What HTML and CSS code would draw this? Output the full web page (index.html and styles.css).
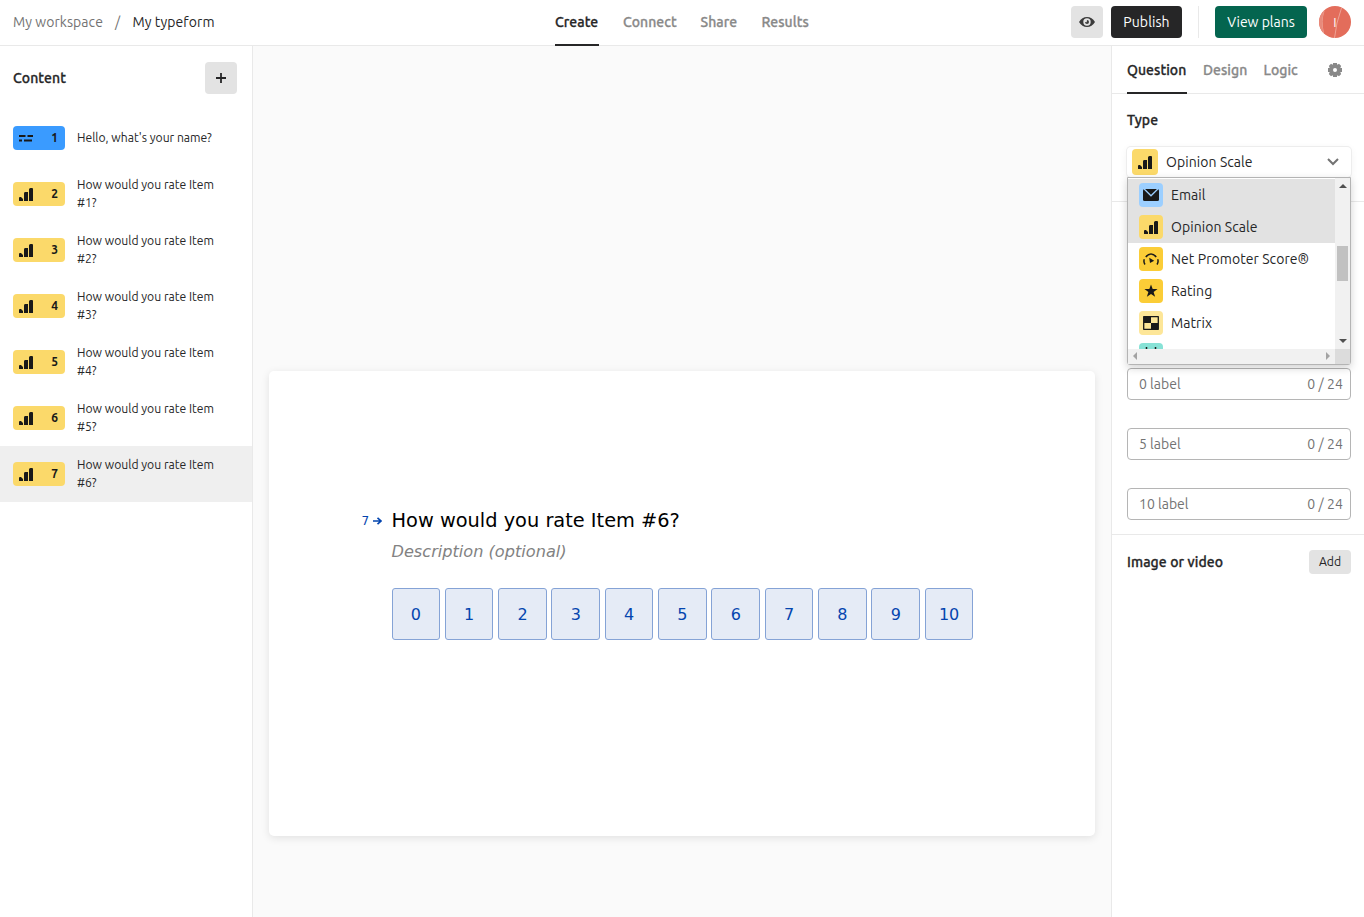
FILE: index.html
```html
<!DOCTYPE html>
<html lang="en">
<head>
<meta charset="utf-8">
<title>My typeform</title>
<link rel="stylesheet" href="styles.css">
</head>
<body>
<svg class="defs" width="0" height="0">
  <symbol id="bars" viewBox="0 0 14 13"><path d="M0 10q0-1 1-1h1l2 2v2H.5q-.5 0-.5-.5zM5 5.500q0-1.500 1-1.500h3v9H5zM10 1.500q0-1.500 1.500-1.500H13q1 0 1 1v12h-4z" fill="currentColor"/></symbol>
</svg>
<header class="topbar">
  <nav class="crumbs"><span class="crumb-ws">My workspace</span><span class="crumb-sep">/</span><span class="crumb-form">My typeform</span></nav>
  <nav class="main-tabs">
    <a class="tab tab-create active">Create</a><a class="tab tab-connect">Connect</a><a class="tab tab-share">Share</a><a class="tab tab-results">Results</a>
  </nav>
  <div class="actions">
    <button class="btn eye"><svg width="16" height="10" viewBox="0 0 16 10"><path fill-rule="evenodd" d="M0 5Q3 0 8 0T16 5Q13 10 8 10T0 5zM8 1.300a3.700 3.700 0 1 0 0 7.400 3.700 3.700 0 0 0 0-7.400z" fill="#3c3c3c"/><path d="M8 3a2 2 0 1 1-2 2l1.700.200z" fill="#3c3c3c"/></svg></button>
    <button class="btn publish">Publish</button>
    <span class="divider"></span>
    <button class="btn plans">View plans</button>
    <span class="avatar"><svg width="32" height="32" viewBox="0 0 32 32"><circle cx="16" cy="16" r="16" fill="#e36d5b"/><path d="M5 5Q1.500 15 4.500 27M22.500 2L18 17 15.500 32" fill="none" stroke="#f0b0a5" stroke-width=".800"/><path d="M5 5Q1.500 15 4.500 27Q0 22 0 16T5 5z" fill="#e88a7b"/></svg><b>I</b></span>
  </div>
</header>
<main class="workspace">
  <aside class="content-panel">
    <div class="content-head"><h2 class="content-title">Content</h2><button class="btn plus"><svg width="10" height="10" viewBox="0 0 10 10"><path d="M5 0v10M0 5h10" stroke="#262627" stroke-width="1.800"/></svg></button></div>
    <ul class="questions">
      <li class="question"><span class="badge blue"><svg width="15" height="7" viewBox="0 0 15 7"><path d="M0 1h6.500M8.500 1H14M0 5.500h3M5 5.500h8" stroke="#191919" stroke-width="1.900"/></svg><b>1</b></span><span class="q-text hello">Hello, what's your name?</span></li>
      <li class="question"><span class="badge"><svg width="14" height="13"><use href="#bars"/></svg><b>2</b></span><span class="q-text">How would you rate Item<br>#1?</span></li>
      <li class="question"><span class="badge"><svg width="14" height="13"><use href="#bars"/></svg><b>3</b></span><span class="q-text">How would you rate Item<br>#2?</span></li>
      <li class="question"><span class="badge"><svg width="14" height="13"><use href="#bars"/></svg><b>4</b></span><span class="q-text">How would you rate Item<br>#3?</span></li>
      <li class="question"><span class="badge"><svg width="14" height="13"><use href="#bars"/></svg><b>5</b></span><span class="q-text">How would you rate Item<br>#4?</span></li>
      <li class="question"><span class="badge"><svg width="14" height="13"><use href="#bars"/></svg><b>6</b></span><span class="q-text">How would you rate Item<br>#5?</span></li>
      <li class="question selected"><span class="badge"><svg width="14" height="13"><use href="#bars"/></svg><b>7</b></span><span class="q-text">How would you rate Item<br>#6?</span></li>
    </ul>
  </aside>
  <section class="canvas">
    <article class="card">
      <div class="prompt">
        <span class="number">7<svg width="9" height="8" viewBox="0 0 9 8"><path d="M0 4h7.500M4.500.800L8 4 4.500 7.200" fill="none" stroke="#0445af" stroke-width="1.600"/></svg></span>
        <h1 class="title">How would you rate Item #6?</h1>
      </div>
      <p class="description">Description (optional)</p>
      <div class="scale"><span>0</span><span>1</span><span>2</span><span>3</span><span>4</span><span>5</span><span>6</span><span>7</span><span>8</span><span>9</span><span>10</span></div>
    </article>
  </section>
  <aside class="settings">
    <nav class="side-tabs">
      <a class="tab tab-question active">Question</a><a class="tab tab-design">Design</a><a class="tab tab-logic">Logic</a>
      <svg class="gear" width="14" height="14" viewBox="0 0 14 14"><path fill-rule="evenodd" d="M5 0h4v1.500h.8L11 .800 13.200 3l-.7 1.200V5H14v4h-1.500v.8l.7 1.200-2.200 2.200-1.200-.7H9V14H5v-1.500h-.8L3 13.200.800 11l.7-1.200V9H0V5h1.500v-.8L.800 3 3 .800l1.200.7H5zM7 5a2 2 0 1 0 0 4 2 2 0 0 0 0-4z" fill="#898989"/></svg>
    </nav>
    <section class="type-section">
      <h3 class="type-title">Type</h3>
      <div class="select">
        <span class="tile big yellow"><svg width="14" height="13"><use href="#bars"/></svg></span><span class="select-text">Opinion Scale</span>
        <svg width="12" height="8" viewBox="0 0 12 8"><path d="M1 1l5 5 5-5" fill="none" stroke="#737373" stroke-width="2"/></svg>
        <div class="menu">
          <div class="options">
            <div class="option on"><span class="tile email"><svg width="16" height="12" viewBox="0 0 16 12"><rect width="16" height="12" rx="1.500" fill="#191919"/><path d="M1.200 0L8 6.800 14.800 0" fill="none" stroke="#9ccfff" stroke-width="1.300"/></svg></span><span class="o-email">Email</span></div>
            <div class="option on"><span class="tile yellow"><svg width="14" height="13"><use href="#bars"/></svg></span><span class="o-opinion">Opinion Scale</span></div>
            <div class="option"><span class="tile gold"><svg width="16" height="12" viewBox="0 0 16 12"><path d="M2 11.500Q.300 9 1.300 6.300M2.800 4Q5 1 8 1T13.200 4M14.700 6.300q1 2.700-.7 5.200" fill="none" stroke="#191919" stroke-width="1.500"/><path d="M6.200 4.700l5 3L7 10z" fill="#191919"/></svg></span><span class="o-nps">Net Promoter Score®</span></div>
            <div class="option"><span class="tile gold"><svg width="14" height="14" viewBox="0 0 16 15"><path d="M8 0l1.900 5.300H15.500L11 8.700l1.700 5.500L8 11l-4.700 3.200L5 8.700.500 5.300h5.600z" fill="#191919"/></svg></span><span class="o-rating">Rating</span></div>
            <div class="option"><span class="tile pale"><svg width="16" height="14" viewBox="0 0 16 14"><path d="M.700.700h14.600v12.600H.700z" fill="none" stroke="#191919" stroke-width="1.300" stroke-linejoin="round"/><path d="M1 1h7v6H1zM8 7h7v6H8z" fill="#191919"/></svg></span><span class="o-matrix">Matrix</span></div>
            <div class="option"><span class="tile teal"><svg width="14" height="16" viewBox="0 0 14 16"><path d="M2.500 0v3M11.500 0v3M0 3h14v12H0z" fill="none" stroke="#191919" stroke-width="1.500"/></svg></span></div>
          </div>
          <div class="vbar"><i class="up"></i><i class="thumb"></i><i class="down"></i></div>
          <div class="hbar"><i class="left"></i><i class="right"></i></div>
          <div class="corner"></div>
        </div>
      </div>
    </section>
    <section class="labels">
      <div class="field"><span>0 label</span><span class="count">0 / 24</span></div>
      <div class="field"><span>5 label</span><span class="count">0 / 24</span></div>
      <div class="field"><span class="ten">10 label</span><span class="count">0 / 24</span></div>
    </section>
    <section class="media"><h3 class="media-title">Image or video</h3><button class="btn add">Add</button></section>
  </aside>
</main>
</body>
</html>
```
FILE: styles.css
```css
* { box-sizing: border-box; }
body { margin: 0; height: 917px; overflow: hidden; display: flex; flex-direction: column; background: #fff; color: #262627; font: 14px/20px Ubuntu, "Noto Sans", sans-serif; white-space: nowrap; }
h1, h2, h3, p, ul { margin: 0; padding: 0; }
h2, h3 { font-size: 14px; font-weight: 500; letter-spacing: .1px; -webkit-text-stroke: .3px currentColor; }
svg { display: block; flex: none; }
.defs { position: absolute; }
.btn { border: 0; padding: 0; border-radius: 4px; height: 32px; display: flex; align-items: center; justify-content: center; font: inherit; color: #262627; background: #e3e3e3; }

.topbar { height: 46px; flex: none; border-bottom: 1px solid #e9e9e9; display: grid; grid-template-columns: 555px 1fr 293px; }
.crumbs { display: flex; padding: 12px 0 0 13px; }
.crumb-ws { width: 102px; color: #737373; letter-spacing: .06px; }
.crumb-sep { width: 17.5px; color: #737373; }
.crumb-form { letter-spacing: .08px; }
.main-tabs { display: flex; gap: 24px; height: 46px; }
.tab { font-weight: 500; color: #898989; padding-top: 12px; letter-spacing: .05px; -webkit-text-stroke: .3px currentColor; }
.tab.active { color: #262627; border-bottom: 2px solid #262627; }
.tab-create { width: 44px; }
.tab-connect { width: 53.5px; }
.tab-share { width: 37px; }
.tab-results { width: 48px; }
.actions { display: flex; padding-top: 6px; }
.eye { width: 32px; margin-right: 8px; }
.publish { width: 71px; color: #fff; background: #262627; letter-spacing: .1px; }
.divider { width: 1px; height: 32px; background: #e9e9e9; margin: 0 16px; }
.plans { width: 92px; color: #fff; background: #04654f; margin-right: 12px; }
.avatar { width: 32px; height: 32px; display: grid; place-items: center; }
.avatar > * { grid-area: 1 / 1; }
.avatar b { color: #fff; font-size: 13px; font-weight: 400; }

.workspace { flex: 1; display: grid; grid-template-columns: 253px 858px 253px; min-height: 0; }
.content-panel { border-right: 1px solid #e9e9e9; }
.content-head { display: flex; align-items: center; justify-content: space-between; padding: 16px 15px 0 13px; margin-bottom: 16px; }
.plus { width: 32px; }
.questions { list-style: none; }
.question { height: 56px; display: flex; align-items: center; padding-left: 13px; gap: 12px; }
.selected { background: #efefef; }
.badge { width: 52px; height: 24px; border-radius: 4px; background: #fbd96a; color: #191919; display: flex; align-items: center; justify-content: space-between; padding: 0 7px 0 6px; font-size: 12px; }
.badge svg { margin-top: 1px; }
.blue { background: #3a9bff; }
.q-text { font-size: 12.15px; line-height: 18px; }

.canvas { background: #fafafa; padding: 325px 16px 0; }
.card { height: 465px; background: #fff; border-radius: 5px; box-shadow: 0 2px 8px rgba(0,0,0,.1); padding: 136px 0 0 92.5px; font-family: "DejaVu Sans", sans-serif; }
.prompt { display: flex; height: 28px; align-items: center; }
.number { width: 30px; display: flex; align-items: center; gap: 4px; font-size: 12px; color: #0445af; }
.title { font-size: 19.360px; font-weight: 400; color: #000; }
.description { margin: 6px 0 0 30px; font-size: 16.150px; line-height: 22px; font-style: italic; color: #828282; }
.scale { display: flex; gap: 4.700px; margin: 25px 0 0 30px; width: 582px; }
.scale span { flex: 1; height: 52px; border: 1px solid #85a3d6; border-radius: 3px; background: #e5ebf6; color: #0445af; font-size: 16px; line-height: 52px; text-align: center; }

.settings { border-left: 1px solid #e9e9e9; }
.side-tabs { height: 48px; border-bottom: 1px solid #e9e9e9; padding-left: 15px; display: flex; gap: 16px; }
.side-tabs .tab { padding-top: 14px; height: 48px; }
.tab-question { width: 60px; }
.tab-design { width: 44.5px; }
.tab-logic { width: 35.5px; }
.gear { margin: 17px 0 0 13px; }
.type-section { height: 108px; border-bottom: 1px solid #e9e9e9; padding: 16px 13px 0 15px; }
.select { position: relative; margin-top: 17px; height: 30px; display: flex; align-items: center; padding: 0 12px 0 5px; border-radius: 4px; box-shadow: 0 0 0 1px #ededed, 0 2px 8px rgba(0,0,0,.06); }
.select-text { flex: 1; padding-left: 8px; letter-spacing: .08px; }
.tile { width: 24px; height: 24px; border-radius: 4px; display: flex; align-items: center; justify-content: center; color: #191919; flex: none; }
.big { width: 26px; height: 26px; }
.yellow { background: #fbd96a; }
.yellow svg { margin-top: 1px; }
.email { background: #9ccfff; }
.gold { background: #fbcd37; }
.pale { background: #fde698; }
.teal { background: #87e2d6; }
.menu { position: absolute; z-index: 2; left: 0; top: 30px; width: 224px; height: 188px; border: 1px solid #b4b4b4; border-radius: 0 0 3px 3px; background: #fff; box-shadow: 0 3px 8px rgba(0,0,0,.18); display: grid; grid-template: 171px 15px / 207px 15px; }
.options { overflow: hidden; padding-top: 1px; background: #fff; }
.option { height: 32px; padding-left: 11px; display: flex; align-items: center; gap: 8px; letter-spacing: .07px; }
.on { background: #e2e2e2; }
.vbar { background: #f1f1f1; display: flex; flex-direction: column; align-items: center; padding: 6px 0 6px; }
.up { border: 4px solid transparent; border-top: 0; border-bottom: 4px solid #505050; }
.thumb { width: 11px; height: 35px; margin: 58px 0 0; background: #c1c1c1; }
.down { margin-top: auto; border: 4px solid transparent; border-bottom: 0; border-top: 4px solid #505050; }
.hbar { background: #f1f1f1; display: flex; justify-content: space-between; align-items: center; padding: 0 5px 1px; }
.left { border: 4px solid transparent; border-left: 0; border-right: 4px solid #a3a3a3; }
.right { border: 4px solid transparent; border-right: 0; border-left: 4px solid #a3a3a3; }
.corner { background: #dcdcdc; }
.labels { padding: 166px 13px 14px 15px; display: flex; flex-direction: column; gap: 28px; border-bottom: 1px solid #e9e9e9; }
.field { height: 32px; border: 1px solid #b5b5b5; border-radius: 4px; padding: 0 7px 0 11px; display: flex; justify-content: space-between; align-items: center; color: #737373; }
.count { letter-spacing: .1px; }
.media { display: flex; justify-content: space-between; align-items: center; padding: 15px 13px 0 15px; }
.add { width: 42px; height: 24px; font-size: 12.2px; }
```
